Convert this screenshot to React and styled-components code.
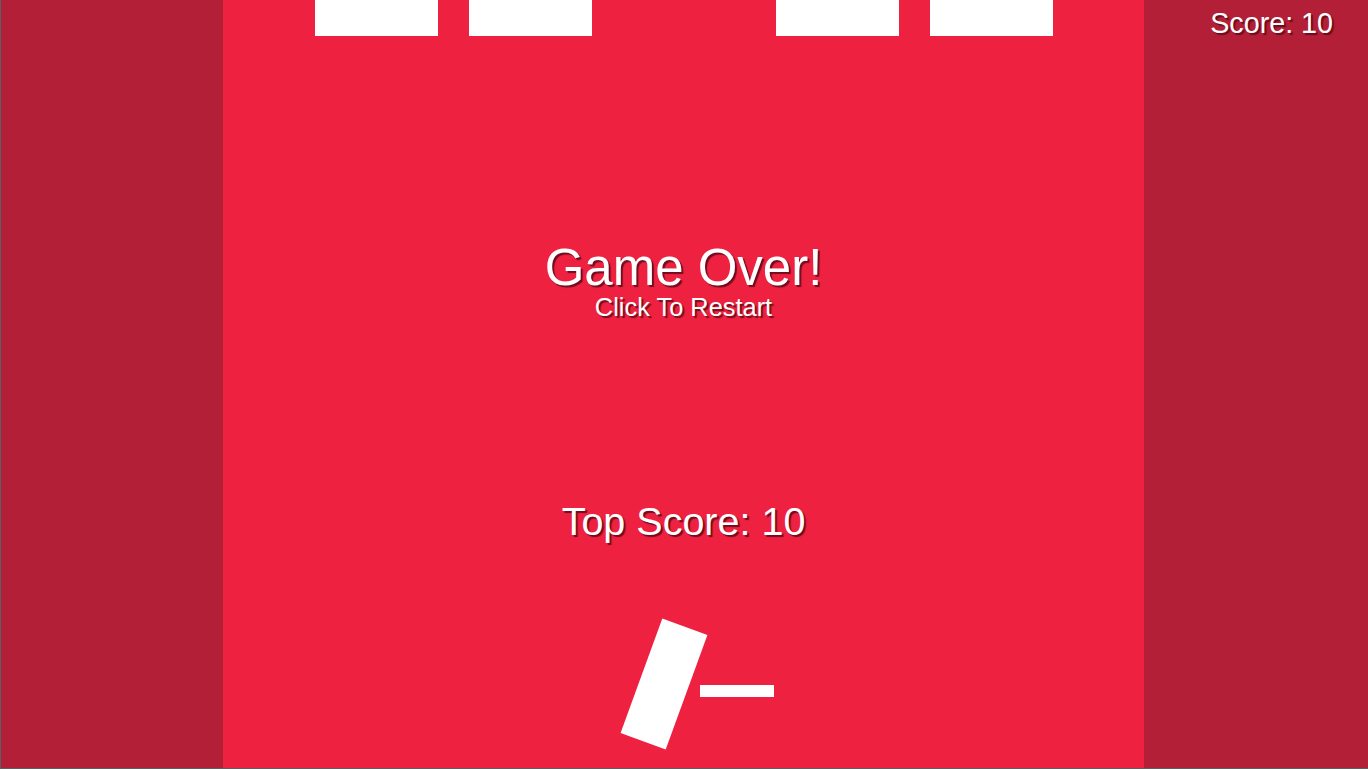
import styled, { createGlobalStyle } from "styled-components";

const GlobalStyle = createGlobalStyle`
  html, body {
    margin: 0;
    padding: 0;
    background: #5b6160;
    overflow: hidden;
  }
`;

const App = () => {
  return (
    <>
      <GlobalStyle />
      <Frame>
        <SidePanel side="left" />
        <Playfield>
          <Block left={92} />
          <Block left={246} />
          <Block left={553} />
          <Block left={707} />

          <Message>
            <Title>Game Over!</Title>
            <Subtitle>Click To Restart</Subtitle>
          </Message>
          <TopScore>Top Score: 10</TopScore>

          <Player />
          <Bar />
        </Playfield>
        <SidePanel side="right">
          <Score>Score: 10</Score>
        </SidePanel>
      </Frame>
    </>
  );
};

const Frame = styled.div`
  display: flex;
  width: 1367px;
  height: 768px;
  padding: 0 0 1px 1px;
  background: #5b6160;
  font-family: "Liberation Sans", Arial, sans-serif;
  color: #ffffff;
`;

const SidePanel = styled.div`
  width: ${(p) => (p.side === "left" ? "222px" : "224px")};
  flex-shrink: 0;
  background: #b31f36;
  box-sizing: border-box;
  padding: 9px 35px 0 0;
  text-align: right;
`;

const Playfield = styled.div`
  position: relative;
  width: 921px;
  flex-shrink: 0;
  background: #ee2240;
  display: flex;
  flex-direction: column;
  align-items: center;
  overflow: hidden;
`;

// obstacles falling from the top
const Block = styled.div`
  position: absolute;
  top: 0;
  left: ${(p) => p.left}px;
  width: 123px;
  height: 36px;
  background: #ffffff;
`;

const shadow = `
  text-shadow: 2px 2px 1px rgba(100, 10, 25, 0.9);
`;

const Message = styled.div`
  margin-top: 242px;
  display: flex;
  flex-direction: column;
  align-items: center;
`;

const Title = styled.div`
  font-size: 51px;
  line-height: 1;
  ${shadow}
`;

const Subtitle = styled.div`
  margin-top: 2px;
  font-size: 25.4px;
  line-height: 1;
  ${shadow}
`;

const TopScore = styled.div`
  margin-top: 182px;
  font-size: 39.5px;
  line-height: 1;
  ${shadow}
`;

const Score = styled.div`
  font-size: 28.7px;
  line-height: 1;
  ${shadow}
`;

const Player = styled.div`
  position: absolute;
  left: 417px;
  top: 623px;
  width: 48px;
  height: 122px;
  background: #ffffff;
  transform: rotate(20deg);
`;

const Bar = styled.div`
  position: absolute;
  left: 477px;
  top: 685px;
  width: 74px;
  height: 12px;
  background: #ffffff;
`;

export default App;
